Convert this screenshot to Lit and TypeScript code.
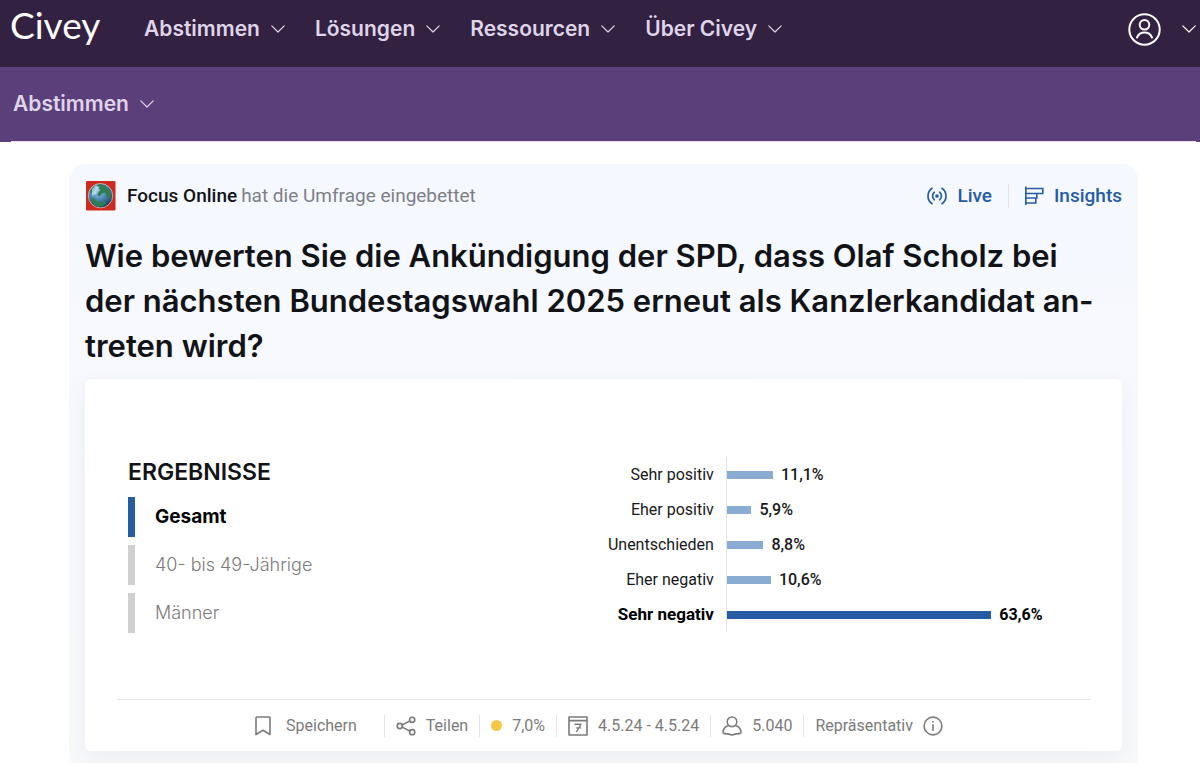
import { LitElement, html, css, svg } from "lit";
import { customElement, property, state } from "lit/decorators.js";
import { classMap } from "lit/directives/class-map.js";

const chevron = html`<svg width="14" height="8" viewBox="0 0 14 8" fill="none" stroke="currentColor" stroke-width="1.2" stroke-linecap="round" stroke-linejoin="round" aria-hidden="true"><path d="M.8.8 7 7 13.2.8" /></svg>`;

@customElement("nav-button")
export class NavButton extends LitElement {
  static styles = css`
    :host {
      display: block;
    }
    .entry {
      display: flex;
      align-items: center;
      gap: 11px;
      padding: 0;
      border: 0;
      background: none;
      color: #dfd4e8;
      font: 600 21px/28px Inter, sans-serif;
      cursor: pointer;
    }
  `;
  @property() label = "";
  render() {
    return html`<button class="entry" aria-haspopup="true">${this.label}${chevron}</button>`;
  }
}

@customElement("site-header")
export class SiteHeader extends LitElement {
  static styles = css`
    :host {
      display: block;
    }
    .top {
      display: flex;
      align-items: center;
      height: 58px;
      padding: 0 4px 9px 10px;
      background: #322141;
    }
    .logo {
      width: 134px;
      padding-bottom: 8px;
      color: #fff;
      font: 400 37px/44px Lato, sans-serif;
      text-decoration: none;
    }
    .links {
      display: flex;
      gap: 30px;
    }
    .account {
      display: flex;
      align-items: center;
      gap: 21px;
      margin-left: auto;
      padding: 0;
      border: 0;
      background: none;
      color: #fff;
      cursor: pointer;
    }
    .sub {
      padding: 0 4px 0 11px;
      background: linear-gradient(#5f427c, #5a3f7b 4px);
    }
    .sub-inner {
      display: flex;
      align-items: center;
      height: 74px;
      padding-left: 2px;
      border-bottom: 1px solid #ecdff7;
    }
  `;
  render() {
    return html`
      <header class="top">
        <a class="logo" href="#">Civey</a>
        <nav class="links">
          ${["Abstimmen", "Lösungen", "Ressourcen", "Über Civey"].map((l) => html`<nav-button label=${l}></nav-button>`)}
        </nav>
        <button class="account" aria-label="Konto">
          <svg width="33" height="33" viewBox="0 0 33 33" fill="none" stroke="currentColor" stroke-width="2" stroke-linecap="round" aria-hidden="true">
            <circle cx="16.5" cy="16.5" r="15.2" />
            <circle cx="16.5" cy="11.8" r="4.8" />
            <path d="M9 24.5a8.2 8.2 0 0 1 15 0" />
          </svg>
          ${chevron}
        </button>
      </header>
      <nav class="sub"><div class="sub-inner"><nav-button label="Abstimmen"></nav-button></div></nav>
    `;
  }
}

interface Answer {
  label: string;
  value: number;
}

@customElement("result-chart")
export class ResultChart extends LitElement {
  static styles = css`
    :host {
      display: block;
      color: #17181a;
      font: 400 16px/35px Roboto, sans-serif;
    }
    .row {
      display: grid;
      grid-template-columns: 26fr 74fr;
    }
    .label {
      padding-right: 12px;
      text-align: right;
      white-space: nowrap;
    }
    .track {
      display: flex;
      align-items: center;
      gap: 8px;
      border-left: 1px solid #e4e4e6;
      font-weight: 500;
    }
    .bar {
      height: 8px;
      background: #8aacd2;
    }
    .top {
      color: #000;
      font-weight: 700;
    }
    .top .label {
      font-size: 17px;
    }
    .top .track {
      font-weight: 700;
    }
    .top .bar {
      background: #265ca4;
    }
  `;
  @property({ attribute: false }) answers: Answer[] = [];
  render() {
    const max = Math.max(...this.answers.map((a) => a.value));
    return this.answers.map(
      (a) => html`<div class=${classMap({ row: true, top: a.value === max })}>
        <span class="label">${a.label}</span>
        <span class="track">
          <span class="bar" style="width:${(a.value / max) * 75.5}%"></span>
          <span>${a.value.toLocaleString("de-DE", { minimumFractionDigits: 1 })}%</span>
        </span>
      </div>`
    );
  }
}

const line = (content: unknown, w = 20, h = 20) => html`<svg width=${w} height=${h} viewBox="0 0 ${w} ${h}" fill="none" stroke="currentColor" stroke-width="1.6" stroke-linejoin="round" stroke-linecap="round" aria-hidden="true">${content}</svg>`;

@customElement("poll-footer")
export class PollFooter extends LitElement {
  static styles = css`
    :host {
      display: flex;
      justify-content: center;
      align-items: center;
      height: 51px;
      border-top: 1px solid #e3e4e6;
      color: #7b7b7b;
      font: 400 16px/22px Roboto, sans-serif;
    }
    .item {
      display: flex;
      align-items: center;
      gap: 10px;
      padding: 0 11px;
      border: 0;
      border-left: 1px solid #e4e4e6;
      background: none;
      color: inherit;
      font: inherit;
      white-space: nowrap;
    }
    .save {
      gap: 13px;
      padding: 0 27px 0 0;
      border-left: 0;
    }
    .dot {
      width: 11px;
      height: 11px;
      border-radius: 50%;
      background: #f5c748;
    }
  `;
  render() {
    return html`
      <button class="item save">${line(svg`<path d="M3 1.8a.8.8 0 0 1 .8-.8h12.4a.8.8 0 0 1 .8.8V18.500l-7-4.300-7 4.300z" />`)}Speichern</button>
      <button class="item">
        ${line(svg`<circle cx="3.800" cy="10" r="2.600" /><circle cx="16.200" cy="3.800" r="2.600" /><circle cx="16.200" cy="16.200" r="2.600" /><path d="M6.100 8.900 13.900 5M6.100 11.100 13.900 15" />`)}Teilen
      </button>
      <span class="item"><span class="dot"></span>7,0%</span>
      <span class="item">
        ${line(svg`<path d="M1 1h18v18H1zM1 4.600h18" /><path d="M7 8.300h6L8.600 15.500M8.600 11.900h4" stroke-width="1.400" />`)}4.5.24 - 4.5.24
      </span>
      <span class="item">
        ${line(svg`<circle cx="10" cy="5.800" r="4.800" /><path d="M6.500 9.600C3.500 10.800 1 13.200 1 16.300c0 .6.300.9.800 1.100C4.500 18 7.500 18 10 19c2.500-1 5.500-1 8.200-1.600.5-.2.800-.5.800-1.100 0-3.100-2.500-5.500-5.500-6.700" />`)}5.040
      </span>
      <span class="item">
        Repräsentativ${line(svg`<circle cx="10" cy="10" r="8.900" /><path d="M10 8.700v5.600M10 5.600v.4" />`)}
      </span>
    `;
  }
}

@customElement("app-root")
export class AppRoot extends LitElement {
  static styles = css`
    :host {
      display: flex;
      flex-direction: column;
      min-height: 100vh;
      background: #fff;
    }
    .page {
      display: flex;
      flex: 1;
      flex-direction: column;
      padding: 22px 62px 0 69px;
    }
    .poll {
      flex: 1;
      padding: 16px 16px 12px;
      border-radius: 16px 16px 0 0;
      background: linear-gradient(#f5f8ff, #f8f9ff 50%, #f8f9fb);
    }
    .source {
      display: flex;
      align-items: center;
      height: 32px;
      color: #7d8087;
      font: 400 19px/24px Roboto, sans-serif;
    }
    .globe {
      margin-right: 11px;
    }
    .name {
      margin-right: 4px;
      color: #111317;
      font-weight: 500;
    }
    .tools {
      display: flex;
      margin-left: auto;
    }
    .tool {
      display: flex;
      align-items: center;
      gap: 10px;
      color: #265ca4;
      font-weight: 500;
      text-decoration: none;
    }
    .tool + .tool {
      margin-left: 16px;
      padding-left: 15px;
      border-left: 1px solid #dfe3ea;
    }
    .question {
      margin: 21px 0 11px;
      padding-right: 16px;
      color: #111317;
      font: 600 31px/45px Inter, sans-serif;
    }
    .panel {
      padding: 78px 32px 0;
      border-radius: 6px;
      background: #fff;
      box-shadow: 0 8px 24px rgba(40, 50, 80, 0.06);
    }
    .results {
      display: grid;
      grid-template-columns: 1fr 1fr;
      margin-bottom: 66px;
      padding: 0 13px 0 11px;
    }
    .heading {
      margin: 0 0 10px;
      color: #111317;
      font: 600 23px/30px Inter, sans-serif;
    }
    .groups {
      display: grid;
      gap: 8px;
    }
    .group {
      height: 40px;
      padding: 0 0 0 20px;
      border: 0;
      border-left: 7px solid #d0d0d0;
      background: none;
      color: #7b7b7b;
      font: 300 18px/28px Inter, sans-serif;
      text-align: left;
      cursor: pointer;
    }
    .group.active {
      border-color: #265ca4;
      color: #000;
      font-size: 19px;
      font-weight: 700;
    }
  `;

  @state() private active = 0;

  private answers: Answer[] = [
    { label: "Sehr positiv", value: 11.1 },
    { label: "Eher positiv", value: 5.9 },
    { label: "Unentschieden", value: 8.8 },
    { label: "Eher negativ", value: 10.6 },
    { label: "Sehr negativ", value: 63.6 },
  ];

  render() {
    return html`
      <site-header></site-header>
      <main class="page">
        <article class="poll">
          <div class="source">
            <svg class="globe" width="31" height="30" viewBox="0 0 31 30" aria-hidden="true">
              <defs>
                <radialGradient id="sea" cx=".4" cy=".3" r=".75">
                  <stop offset="0" stop-color="#9cc8e6" />
                  <stop offset=".5" stop-color="#4a88b4" />
                  <stop offset="1" stop-color="#12344a" />
                </radialGradient>
              </defs>
              <rect x="1" width="29.500" height="29.500" rx="1" fill="#cf2a20" />
              <circle cx="15.500" cy="14.700" r="12.200" fill="url(#sea)" stroke="#d9c3b4" stroke-width=".8" />
              <path d="M12 4l3-1 5 1.500 4 4 2 5-1.500 5-3-3.500-1.500-3.500-3 1-2.500 3-2-1.500 1-3 2-2-2-1.500zM5 10l3.500-4 1.500 1-1.500 3-3 3zM5 17l4 .5 3 2.500 3.500 1 4-.5 1.500 2-3 2.500-4 .8-5-1.800z" fill="#2f7d55" />
              <path d="M7 8l4-3 4 1-3 3-1 4-4 2z" fill="#d7ecf3" opacity=".6" />
            </svg>
            <span class="name">Focus Online</span> hat die Umfrage eingebettet
            <nav class="tools">
              <a class="tool" href="#live">
                <svg width="20" height="18" viewBox="0 0 20 18" fill="none" stroke="currentColor" stroke-width="1.700" stroke-linecap="round" aria-hidden="true">
                  <circle cx="10" cy="9" r="1" fill="currentColor" />
                  <path d="M7.300 5.200a5 5 0 0 0 0 7.600M12.700 5.200a5 5 0 0 1 0 7.600M5 1.300a9.400 9.400 0 0 0 0 15.400M15 1.300a9.400 9.400 0 0 1 0 15.400" />
                </svg>
                Live
              </a>
              <a class="tool" href="#insights">
                <svg width="20" height="20" viewBox="0 0 20 20" fill="none" stroke="currentColor" stroke-width="1.600" aria-hidden="true">
                  <path d="M1.800 .5v18.500M1.800 2.500h17v5h-17M1.800 7.500h11V12h-11M1.800 12h10v5H1.800" />
                </svg>
                Insights
              </a>
            </nav>
          </div>
          <h1 class="question" lang="de">Wie bewerten Sie die Ankündigung der SPD, dass Olaf Scholz bei der nächsten Bundestagswahl 2025 erneut als Kanzlerkandidat an&shy;treten wird?</h1>
          <section class="panel">
            <div class="results">
              <div>
                <h2 class="heading">ERGEBNISSE</h2>
                <div class="groups">
                  ${["Gesamt", "40- bis 49-Jährige", "Männer"].map(
                    (g, i) => html`<button class=${classMap({ group: true, active: i === this.active })} @click=${() => (this.active = i)}>${g}</button>`
                  )}
                </div>
              </div>
              <result-chart .answers=${this.answers}></result-chart>
            </div>
            <poll-footer></poll-footer>
          </section>
        </article>
      </main>
    `;
  }
}
